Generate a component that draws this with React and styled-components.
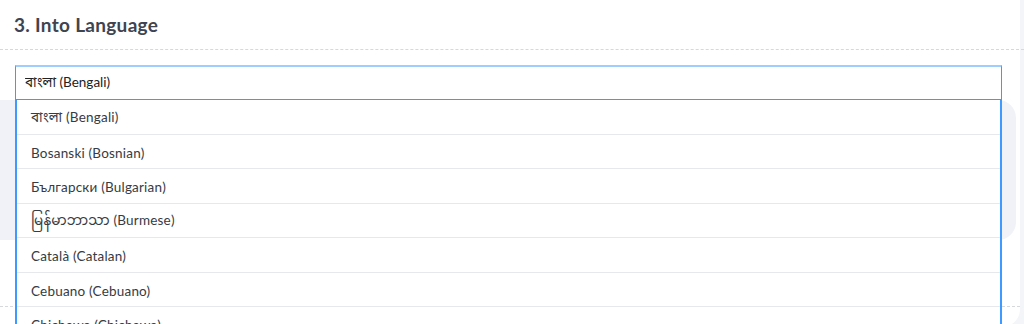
import React, { useState } from 'react'
import styled, { createGlobalStyle } from 'styled-components'

const GlobalStyle = createGlobalStyle`
  html, body {
    margin: 0;
    padding: 0;
    background: #f3f5f9;
    font-family: "Lato", "Noto Sans", "Noto Sans Bengali", "Noto Sans Myanmar", sans-serif;
    overflow: hidden;
  }
`

const languages = [
  'বাংলা (Bengali)',
  'Bosanski (Bosnian)',
  'Български (Bulgarian)',
  'မြန်မာဘာသာ (Burmese)',
  'Català (Catalan)',
  'Cebuano (Cebuano)',
  'Chichewa (Chichewa)',
]

export default function App() {
  const [value, setValue] = useState('বাংলা (Bengali)')

  return (
    <>
      <GlobalStyle />
      <Page>
        <Card>
          <Heading>3. Into Language</Heading>
          <Body>
            <Picker>
              <SearchInput value={value} onChange={(e) => setValue(e.target.value)} />
              <Menu>
                {languages.map((lang) => (
                  <Option key={lang}>{lang}</Option>
                ))}
              </Menu>
            </Picker>
            <TextBox />
            <Spacer />
            <Footer />
          </Body>
        </Card>
      </Page>
    </>
  )
}

const Page = styled.div`
  width: 1024px;
  height: 324px;
  overflow: hidden;
`

const Card = styled.div`
  width: 1020px;
  background: #ffffff;
  border-radius: 0 0 18px 0;
`

const Heading = styled.h2`
  margin: 0;
  height: 50px;
  padding: 13px 14px 0;
  box-sizing: border-box;
  font-size: 19px;
  font-weight: 700;
  color: #3e4450;
  letter-spacing: 0.3px;
  border-bottom: 1px dashed #d6d8dc;
  width: 1024px;
`

const Body = styled.div`
  padding: 15px 0 0;
  display: flex;
  flex-direction: column;
`

const Picker = styled.div`
  position: relative;
  margin: 0 18px 0 15px;
  z-index: 2;
`

const SearchInput = styled.input`
  display: block;
  width: 100%;
  height: 35px;
  box-sizing: border-box;
  border: 1px solid #3d9bff;
  border-top: 2px solid #9ecdff;
  outline: none;
  padding: 1px 9px 0;
  font-family: inherit;
  font-size: 13.5px;
  color: #222;
  background: #fff;
  caret-color: #111;
`

const Menu = styled.ul`
  position: absolute;
  left: 0;
  right: 0;
  top: 35px;
  margin: 0;
  padding: 0;
  list-style: none;
  background: #fff;
  border-left: 2px solid #3d9bff;
  border-right: 2px solid #3d9bff;
`

const Option = styled.li`
  height: 34.5px;
  box-sizing: border-box;
  display: flex;
  align-items: center;
  padding: 3px 14px 0;
  font-size: 13.5px;
  letter-spacing: 0.2px;
  color: #363b44;
  border-bottom: 1px solid #e6e8ec;
`

const TextBox = styled.div`
  margin: 0 4px 0 -20px;
  height: 140px;
  border-radius: 18px;
  background: #f0f2f7;
`

const Spacer = styled.div`
  height: 66px;
`

const Footer = styled.div`
  border-top: 1px dashed #d6d8dc;
  height: 20px;
`
